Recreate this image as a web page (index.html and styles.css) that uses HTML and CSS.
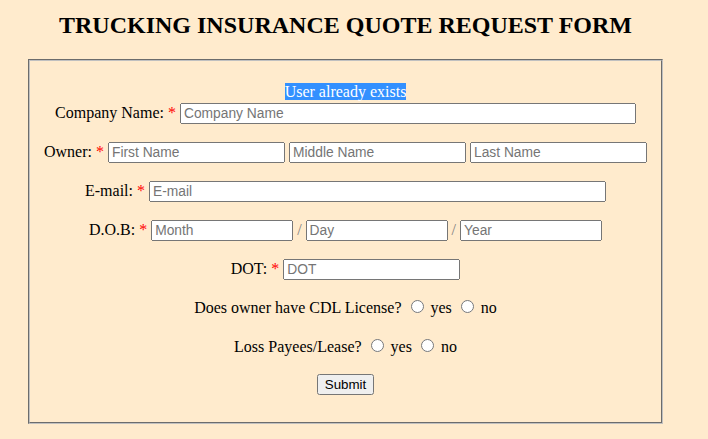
FILE: index.html
```html
<!DOCTYPE html>
<html>
<head>
<meta charset="utf-8">
<title>Trucking Insurance Quote Request Form</title>
<link rel="stylesheet" href="styles.css">
</head>
<body>
<div class="page">
  <h2 class="title">TRUCKING INSURANCE QUOTE REQUEST FORM</h2>
  <form class="quote-form">
    <fieldset class="box">
      <div class="row first-row">
        <div class="error-line"><span class="error">User already exists</span></div>
        Company Name: <span class="req">*</span> <input type="text" class="in in-company" placeholder="Company Name">
      </div>
      <p class="row">Owner: <span class="req">*</span> <input type="text" class="in in-name" placeholder="First Name"> <input type="text" class="in in-name" placeholder="Middle Name"> <input type="text" class="in in-name" placeholder="Last Name"></p>
      <p class="row">E-mail: <span class="req">*</span> <input type="text" class="in in-email" placeholder="E-mail"></p>
      <p class="row">D.O.B: <span class="req">*</span> <input type="text" class="in in-dob" placeholder="Month"> <span class="sep">/</span> <input type="text" class="in in-dob" placeholder="Day"> <span class="sep">/</span> <input type="text" class="in in-dob" placeholder="Year"></p>
      <p class="row">DOT: <span class="req">*</span> <input type="text" class="in in-dot" placeholder="DOT"></p>
      <p class="row">Does owner have CDL License? <input type="radio" name="cdl" class="radio"> yes <input type="radio" name="cdl" class="radio"> no</p>
      <p class="row">Loss Payees/Lease? <input type="radio" name="loss" class="radio"> yes <input type="radio" name="loss" class="radio"> no</p>
      <p class="row submit-row"><input type="submit" class="submit" value="Submit"></p>
    </fieldset>
  </form>
</div>
</body>
</html>
```
FILE: styles.css
```css
html, body {
  background: #ffebcd;
}
body {
  margin: 8px;
  font-family: "Liberation Serif", "Times New Roman", serif;
  font-size: 16px;
  color: #000;
}
.page {
  width: 675px;
}
.title {
  font-size: 24px;
  font-weight: bold;
  text-align: center;
  margin: 4px 0 20px;
}
.quote-form {
  margin: 0 20px;
}
.box {
  margin: 0;
  padding: 5.6px 12px 10px;
  border: 2px groove #c0c0c0;
  text-align: center;
  min-width: 0;
}
.row {
  margin: 16px 0;
  line-height: 23px;
}
.submit-row {
  line-height: 22px;
}
.error-line {
  line-height: normal;
}
.error {
  background: #3390ff;
  color: #fff;
}
.req {
  color: red;
}
.sep {
  color: #808080;
}
.in {
  box-sizing: border-box;
  font-family: "Liberation Sans", Arial, sans-serif;
  font-size: 13.8px;
  line-height: normal;
  height: 21px;
  padding: 1px 2px;
}
.in::placeholder {
  color: #757575;
}
.in-company { width: 456px; }
.in-name { width: 177px; }
.in-email { width: 457px; }
.in-dob { width: 142px; }
.in-dot { width: 177px; }
.radio {
  vertical-align: baseline;
}
.submit {
  font-family: "Liberation Sans", Arial, sans-serif;
  font-size: 13.333px;
  line-height: normal;
  vertical-align: top;
}
```
